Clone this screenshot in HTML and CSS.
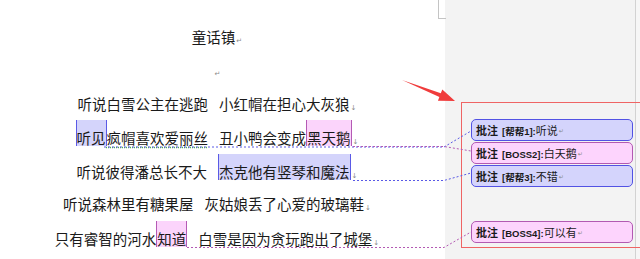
FILE: index.html
```html
<!DOCTYPE html>
<html lang="zh-CN">
<head>
    <meta charset="UTF-8">
    <meta name="viewport" content="width=device-width, initial-scale=1.0">
    <title>童话镇 - 批注</title>
    <link rel="stylesheet" href="styles.css">
</head>
<body>
    <div class="window">
        <div class="page">
            <div class="corner-mark"></div>
            <div class="doc">
                <p class="line">童话镇<span class="mark">↵</span></p>
                <p class="line"><span class="mark">↵</span></p>
                <p class="line">听说白雪公主在逃跑<span class="gap"></span>小红帽在担心大灰狼<span class="mark">↓</span></p>
                <p class="line"><span class="hl hl-blue">听见</span><span class="grammar">疯帽喜欢爱丽丝</span><span class="gap"></span>丑小鸭会变成<span class="hl hl-pink">黑天鹅</span><span class="mark">↓</span></p>
                <p class="line">听说彼得潘总长不大<span class="gap"></span><span class="hl hl-blue">杰克他有竖琴和魔法</span><span class="mark">↓</span></p>
                <p class="line">听说森林里有糖果屋<span class="gap"></span>灰姑娘丢了心爱的玻璃鞋<span class="mark">↓</span></p>
                <p class="line">只有睿智的河水<span class="hl hl-pink">知道</span><span class="gap"></span>白雪是因为贪玩跑出了城堡<span class="mark">↓</span></p>
            </div>
        </div>

        <div class="markup">
            <div class="callout">
                <div class="comment comment-blue"><b>批注<span class="author">[帮帮1]:</span></b>听说<span class="mark">↵</span></div>
                <div class="comment comment-pink"><b>批注<span class="author">[BOSS2]:</span></b>白天鹅<span class="mark">↵</span></div>
                <div class="comment comment-blue"><b>批注<span class="author">[帮帮3]:</span></b>不错<span class="mark">↵</span></div>
                <div class="comment comment-pink comment-last"><b>批注<span class="author">[BOSS4]:</span></b>可以有<span class="mark">↵</span></div>
            </div>
        </div>
        <div class="scroll-edge"></div>

        <!-- comment connectors and the red pointer, drawn over the page -->
        <svg class="overlay" width="640" height="259" viewBox="0 0 640 259">
            <polyline class="link-blue" points="104,147 444,147 471,131"/>
            <polyline class="link-pink" points="353,146.5 444,146.5 471,151"/>
            <polyline class="link-blue" points="353,180.5 444,180.5 471,173"/>
            <polyline class="link-pink" points="187,247.5 444,247.5 471,232"/>
            <polygon class="pointer" points="402,80 440.8,93.2 442.3,89.5 455,101 437.9,100.7 439.4,97"/>
        </svg>
    </div>
</body>
</html>
```

FILE: styles.css
```css
body {
    margin: 0;
    font-family: "Noto Sans CJK SC", "Noto Sans", sans-serif;
    color: #1a1a1a;
    background-color: #ffffff;
}

.window {
    position: relative;
    display: flex;
    width: 640px;
    height: 259px;
    overflow: hidden;
}

.page {
    position: relative;
    width: 445px;
    background-color: #ffffff;
}

.corner-mark {
    position: absolute;
    top: 0;
    left: 438px;
    width: 7px;
    height: 18px;
    border-left: 1px solid #c4c4c4;
    border-bottom: 1px solid #c4c4c4;
}

.doc {
    width: 434px;
    padding-top: 19.5px;
    text-align: center;
    font-size: 14.5px;
}

.line {
    margin: 0;
    height: 33.5px;
    line-height: 33.5px;
    white-space: nowrap;
}

.gap {
    display: inline-block;
    width: 11px;
}

.mark {
    font-family: "DejaVu Sans", sans-serif;
    font-size: 7px;
    color: #8a8a8a;
    margin-left: 1px;
}

.hl {
    display: inline-block;
    padding-top: 9px;
    line-height: 17px;
    border-left: 1px solid;
    border-right: 1px solid;
}

.hl-blue {
    background-color: #d4d4fb;
    border-color: #5a5ae6;
}

.hl-pink {
    background-color: #fbd4fb;
    border-color: #b45ab4;
}

.grammar {
    text-decoration: underline dotted #4caf50;
    text-underline-offset: 3px;
}

.markup {
    width: 190px;
    background-color: #f3f3f3;
    padding-top: 102px;
}

.scroll-edge {
    width: 4px;
    border-left: 1px solid #d2d2d2;
    background-color: #f6f6f6;
}

.callout {
    position: relative;
    z-index: 1;
    width: 173px;
    height: 128px;
    margin-left: 16px;
    padding: 16px 0 0 9px;
    border: 1px solid #ef6464;
    box-sizing: content-box;
    display: flex;
    flex-direction: column;
    gap: 1px;
}

.comment {
    display: flex;
    align-items: center;
    width: 162px;
    height: 22px;
    box-sizing: border-box;
    padding-left: 4px;
    border: 1px solid;
    border-radius: 5px;
    font-size: 11px;
    white-space: nowrap;
}

.comment b {
    font-weight: bold;
}

.author {
    font-family: "Liberation Sans", "Noto Sans CJK SC", sans-serif;
    font-size: 9.5px;
    margin-left: 4px;
}

.comment .mark {
    font-size: 6px;
}

.comment-blue {
    background-color: #d4d4fc;
    border-color: #5252e4;
}

.comment-pink {
    background-color: #fdd4fd;
    border-color: #b25ab2;
}

.comment-last {
    margin-top: 33px;
}

.overlay {
    position: absolute;
    top: 0;
    left: 0;
    z-index: 2;
    pointer-events: none;
}

.overlay polyline {
    fill: none;
    stroke-width: 1;
    stroke-dasharray: 2 2;
}

.link-blue {
    stroke: #5a5ae6;
}

.link-pink {
    stroke: #b45ab4;
}

.pointer {
    fill: #f03c3c;
}
```
